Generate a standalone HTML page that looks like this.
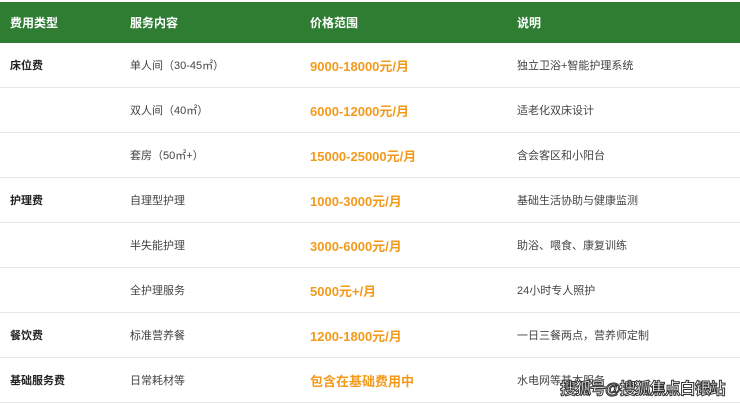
<!DOCTYPE html><html><head><meta charset="utf-8"><style>
body{margin:0;width:740px;height:402px;overflow:hidden;background:#fff;font-family:"Liberation Sans","Noto Sans CJK SC",sans-serif;position:relative}
table{border-collapse:collapse;width:740px;table-layout:fixed;position:absolute;top:2px;left:0}
th{background:#2e7d32;color:#fff;font-size:12px;font-weight:bold;text-align:left;height:41px;padding:0 0 0 10px}
td{height:44px;border-bottom:1px solid #e6e6e6;font-size:11px;color:#444;padding:0 0 0 10px}
td.t{font-weight:bold;color:#222}
td.p{color:#f39a1b;font-weight:bold;font-size:13px}
.wm{position:absolute;left:560px;top:375px;font-size:16px;white-space:nowrap;color:#fff;font-weight:bold;-webkit-text-stroke:1px #333;letter-spacing:-1px}
</style></head><body>
<table><colgroup><col style="width:120px"><col style="width:180px"><col style="width:207px"><col></colgroup>
<tr><th>费用类型</th><th>服务内容</th><th>价格范围</th><th>说明</th></tr>
<tr><td class="t">床位费</td><td>单人间（30-45㎡）</td><td class="p">9000-18000元/月</td><td>独立卫浴+智能护理系统</td></tr>
<tr><td></td><td>双人间（40㎡）</td><td class="p">6000-12000元/月</td><td>适老化双床设计</td></tr>
<tr><td></td><td>套房（50㎡+）</td><td class="p">15000-25000元/月</td><td>含会客区和小阳台</td></tr>
<tr><td class="t">护理费</td><td>自理型护理</td><td class="p">1000-3000元/月</td><td>基础生活协助与健康监测</td></tr>
<tr><td></td><td>半失能护理</td><td class="p">3000-6000元/月</td><td>助浴、喂食、康复训练</td></tr>
<tr><td></td><td>全护理服务</td><td class="p">5000元+/月</td><td>24小时专人照护</td></tr>
<tr><td class="t">餐饮费</td><td>标准营养餐</td><td class="p">1200-1800元/月</td><td>一日三餐两点，营养师定制</td></tr>
<tr><td class="t">基础服务费</td><td>日常耗材等</td><td class="p">包含在基础费用中</td><td>水电网等基本服务</td></tr>
</table>
<div class="wm">搜狐号@搜狐焦点白银站</div>
</body></html>
